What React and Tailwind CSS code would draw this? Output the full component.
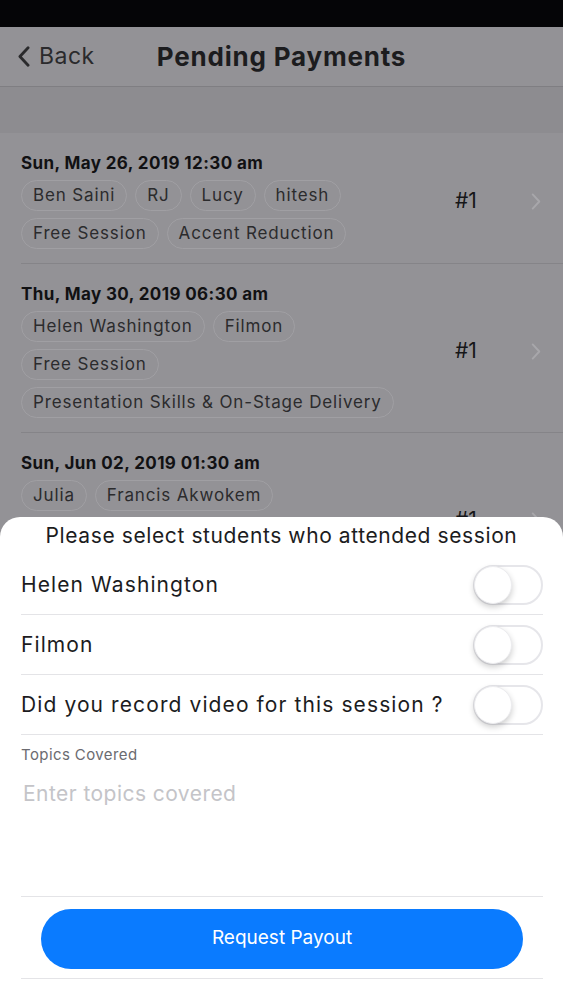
const rows = [
  {
    date: "Sun, May 26, 2019 12:30 am",
    students: ["Ben Saini", "RJ", "Lucy", "hitesh"],
    topics: ["Free Session", "Accent Reduction"],
  },
  {
    date: "Thu, May 30, 2019 06:30 am",
    students: ["Helen Washington", "Filmon"],
    topics: ["Free Session", "Presentation Skills & On-Stage Delivery"],
  },
  {
    date: "Sun, Jun 02, 2019 01:30 am",
    students: ["Julia", "Francis Akwokem"],
    topics: ["Free Session", "Presentation Skills & On-Stage Delivery"],
  },
];

function Chip({ label }) {
  return (
    <span className="h-[31px] px-[11px] flex items-center rounded-full border border-[#a09fa3] text-[17px] tracking-[0.85px] text-[#2b2b2d]">
      {label}
    </span>
  );
}

function Chevron({ className, color = "#a8a7ab", width = 2 }) {
  return (
    <svg className={className} viewBox="0 0 10 18" fill="none">
      <polyline
        points="1.5,1.5 8.5,9 1.5,16.5"
        stroke={color}
        strokeWidth={width}
        strokeLinecap="round"
        strokeLinejoin="round"
      />
    </svg>
  );
}

function PaymentRow({ row }) {
  return (
    <div className="pl-[21px]">
      <div className="flex items-center border-b border-[#858488] pr-[22px] pt-[20px] pb-[14px]">
        <div className="flex-1 min-w-0 pr-[40px]">
          <div className="h-[22px] flex items-center text-[17px] font-bold tracking-[0.4px] text-[#111113]">
            {row.date}
          </div>
          <div className="mt-[5px] flex flex-col gap-[7px]">
            <div className="flex flex-wrap gap-[7px_8px]">
              {row.students.map((s) => (
                <Chip key={s} label={s} />
              ))}
            </div>
            <div className="flex flex-wrap gap-[7px_8px]">
              {row.topics.map((t) => (
                <Chip key={t} label={t} />
              ))}
            </div>
          </div>
        </div>
        <div className="w-[86px] flex items-center justify-between">
          <span className="text-[21px] text-[#161618]">#1</span>
          <Chevron className="w-[10px] h-[17px]" />
        </div>
      </div>
    </div>
  );
}

function Toggle() {
  return (
    <div className="w-[70px] h-[40px] rounded-full border-2 border-[#e6e6ea] bg-white relative shrink-0">
      <div className="absolute left-[-1px] top-[-1px] w-[38px] h-[38px] rounded-full bg-white border border-[#ececef] shadow-[0_3px_6px_rgba(0,0,0,0.2)]" />
    </div>
  );
}

function ToggleRow({ label }) {
  return (
    <div className="h-[60px] flex items-center justify-between border-b border-[#e4e4e7]">
      <span className="text-[21px] tracking-[1.1px] text-[#1c1c1e]">{label}</span>
      <Toggle />
    </div>
  );
}

export default function App() {
  return (
    <div
      className="relative h-[1000px] overflow-hidden bg-[#939296]"
      style={{ fontFamily: "Inter, 'Noto Sans', sans-serif" }}
    >
      <div className="h-[27px] bg-[#050507]" />
      <div className="h-[60px] bg-[#939296] border-b border-[#7f7e82] flex items-center relative">
        <div className="flex items-center pl-[18px] gap-[9px]">
          <Chevron className="w-[12px] h-[21px] rotate-180" color="#2a2a2c" width={2.4} />
          <span className="text-[23px] tracking-[0.5px] text-[#2a2a2c]">Back</span>
        </div>
        <span className="absolute left-0 right-0 text-center text-[26px] font-bold tracking-[0.8px] text-[#1c1c1e] pointer-events-none">
          Pending Payments
        </span>
      </div>
      <div className="h-[46px] bg-[#8d8c90]" />
      <div>
        {rows.map((r) => (
          <PaymentRow key={r.date} row={r} />
        ))}
      </div>

      <div className="absolute inset-x-0 top-[517px] bottom-0 bg-white rounded-t-[20px] flex flex-col">
        <div className="h-[38px] flex items-center justify-center text-[21px] tracking-[0.6px] text-[#1c1c1e]">
          Please select students who attended session
        </div>
        <div className="px-[21px] pr-[20px]">
          <ToggleRow label="Helen Washington" />
          <ToggleRow label="Filmon" />
          <ToggleRow label="Did you record video for this session ?" />
          <div className="h-[162px] border-b border-[#e4e4e7]">
            <div className="pt-[9px] text-[15px] tracking-[0.4px] text-[#6b6b70]">Topics Covered</div>
            <div className="mt-[11px] pl-[2px] text-[21px] tracking-[0.45px] text-[#c4c4c8]">Enter topics covered</div>
          </div>
          <div className="h-[82px] flex items-center justify-center border-b border-[#e4e4e7]">
            <button className="w-[482px] h-[60px] rounded-full bg-[#0a7bff] text-white text-[19px] mt-[2px]">
              Request Payout
            </button>
          </div>
        </div>
      </div>
    </div>
  );
}
